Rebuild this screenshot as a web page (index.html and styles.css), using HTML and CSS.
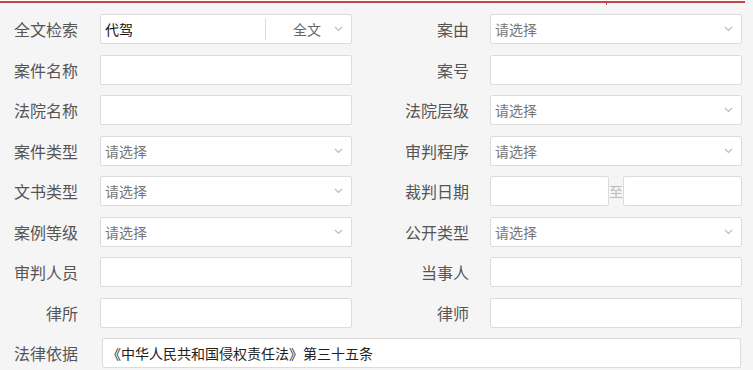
FILE: index.html
```html
<!DOCTYPE html>
<html lang="zh-CN">

<head>
  <meta charset="UTF-8">
  <meta name="viewport" content="width=device-width, initial-scale=1.0">
  <title>高级检索</title>
  <link rel="stylesheet" href="styles.css">
</head>

<body>
  <div class="topbar"><span class="tab-tick"></span></div>

  <form class="search-form">
    <div class="row">
      <label class="label">全文检索</label>
      <div class="box combo">
        <input type="text" class="combo-input" value="代驾">
        <div class="combo-select">
          <span>全文</span>
          <svg class="chevron" width="9" height="6" viewBox="0 0 9 6"><path d="M1 1l3.5 3.5L8 1" fill="none" stroke="#bbb" stroke-width="1.2"/></svg>
        </div>
      </div>
      <label class="label label-right">案由</label>
      <div class="box select">
        <span class="placeholder">请选择</span>
        <svg class="chevron" width="9" height="6" viewBox="0 0 9 6"><path d="M1 1l3.5 3.5L8 1" fill="none" stroke="#bbb" stroke-width="1.2"/></svg>
      </div>
    </div>

    <div class="row">
      <label class="label">案件名称</label>
      <input type="text" class="box">
      <label class="label label-right">案号</label>
      <input type="text" class="box">
    </div>

    <div class="row">
      <label class="label">法院名称</label>
      <input type="text" class="box">
      <label class="label label-right">法院层级</label>
      <div class="box select">
        <span class="placeholder">请选择</span>
        <svg class="chevron" width="9" height="6" viewBox="0 0 9 6"><path d="M1 1l3.5 3.5L8 1" fill="none" stroke="#bbb" stroke-width="1.2"/></svg>
      </div>
    </div>

    <div class="row">
      <label class="label">案件类型</label>
      <div class="box select">
        <span class="placeholder">请选择</span>
        <svg class="chevron" width="9" height="6" viewBox="0 0 9 6"><path d="M1 1l3.5 3.5L8 1" fill="none" stroke="#bbb" stroke-width="1.2"/></svg>
      </div>
      <label class="label label-right">审判程序</label>
      <div class="box select">
        <span class="placeholder">请选择</span>
        <svg class="chevron" width="9" height="6" viewBox="0 0 9 6"><path d="M1 1l3.5 3.5L8 1" fill="none" stroke="#bbb" stroke-width="1.2"/></svg>
      </div>
    </div>

    <div class="row">
      <label class="label">文书类型</label>
      <div class="box select">
        <span class="placeholder">请选择</span>
        <svg class="chevron" width="9" height="6" viewBox="0 0 9 6"><path d="M1 1l3.5 3.5L8 1" fill="none" stroke="#bbb" stroke-width="1.2"/></svg>
      </div>
      <label class="label label-right">裁判日期</label>
      <div class="date-range">
        <input type="text" class="box date">
        <span class="date-sep">至</span>
        <input type="text" class="box date">
      </div>
    </div>

    <div class="row">
      <label class="label">案例等级</label>
      <div class="box select">
        <span class="placeholder">请选择</span>
        <svg class="chevron" width="9" height="6" viewBox="0 0 9 6"><path d="M1 1l3.5 3.5L8 1" fill="none" stroke="#bbb" stroke-width="1.2"/></svg>
      </div>
      <label class="label label-right">公开类型</label>
      <div class="box select">
        <span class="placeholder">请选择</span>
        <svg class="chevron" width="9" height="6" viewBox="0 0 9 6"><path d="M1 1l3.5 3.5L8 1" fill="none" stroke="#bbb" stroke-width="1.2"/></svg>
      </div>
    </div>

    <div class="row">
      <label class="label">审判人员</label>
      <input type="text" class="box">
      <label class="label label-right">当事人</label>
      <input type="text" class="box">
    </div>

    <div class="row">
      <label class="label">律所</label>
      <input type="text" class="box">
      <label class="label label-right">律师</label>
      <input type="text" class="box">
    </div>

    <div class="row">
      <label class="label">法律依据</label>
      <input type="text" class="box wide" value="《中华人民共和国侵权责任法》第三十五条">
    </div>
  </form>
</body>

</html>
```

FILE: styles.css
```css
body {
  font-family: 'Noto Sans CJK SC', 'Noto Sans', sans-serif;
  margin: 0;
  padding: 0;
  background-color: #f5f5f5;
  color: #555;
}

.topbar {
  position: relative;
  width: 745px;
  height: 1px;
  border-bottom: 2px solid #c0464a;
  background-color: #fff;
}

.tab-tick {
  position: absolute;
  left: 606px;
  top: 1px;
  width: 1px;
  height: 4px;
  background-color: #c0464a;
}

.search-form {
  padding: 11px 0 0 14px;
  display: flex;
  flex-direction: column;
  gap: 10.5px;
}

.row {
  display: flex;
  align-items: center;
  height: 30px;
}

.label {
  width: 64px;
  margin-right: 22px;
  text-align: right;
  font-size: 16px;
  color: #555;
  white-space: nowrap;
}

.label-right {
  width: 117px;
  margin-right: 21px;
}

.box {
  box-sizing: border-box;
  width: 252px;
  height: 30px;
  border: 1px solid #dcdcdc;
  border-radius: 2px;
  background-color: #fff;
  font-family: inherit;
  font-size: 14px;
  color: #222;
  padding: 0 4px;
  margin: 0;
  outline: none;
}

.wide {
  width: 639px;
  margin-left: 2px;
}

.select {
  display: flex;
  align-items: center;
  justify-content: space-between;
  padding-right: 8px;
}

.placeholder {
  color: #777;
}

.combo {
  display: flex;
  align-items: center;
  padding: 0;
}

.combo-input {
  flex: 1;
  min-width: 0;
  height: 100%;
  border: none;
  background: transparent;
  font-family: inherit;
  font-size: 14px;
  color: #111;
  padding: 0 4px;
  outline: none;
}

.combo-select {
  display: flex;
  align-items: center;
  justify-content: space-between;
  width: 86px;
  height: 22px;
  box-sizing: border-box;
  border-left: 1px solid #ddd;
  padding: 0 8px 0 27px;
  color: #666;
}

.date-range {
  display: flex;
  align-items: center;
}

.date {
  width: 119px;
}

.date-sep {
  width: 14px;
  font-size: 14px;
  color: #bbb;
  text-align: center;
}
```
